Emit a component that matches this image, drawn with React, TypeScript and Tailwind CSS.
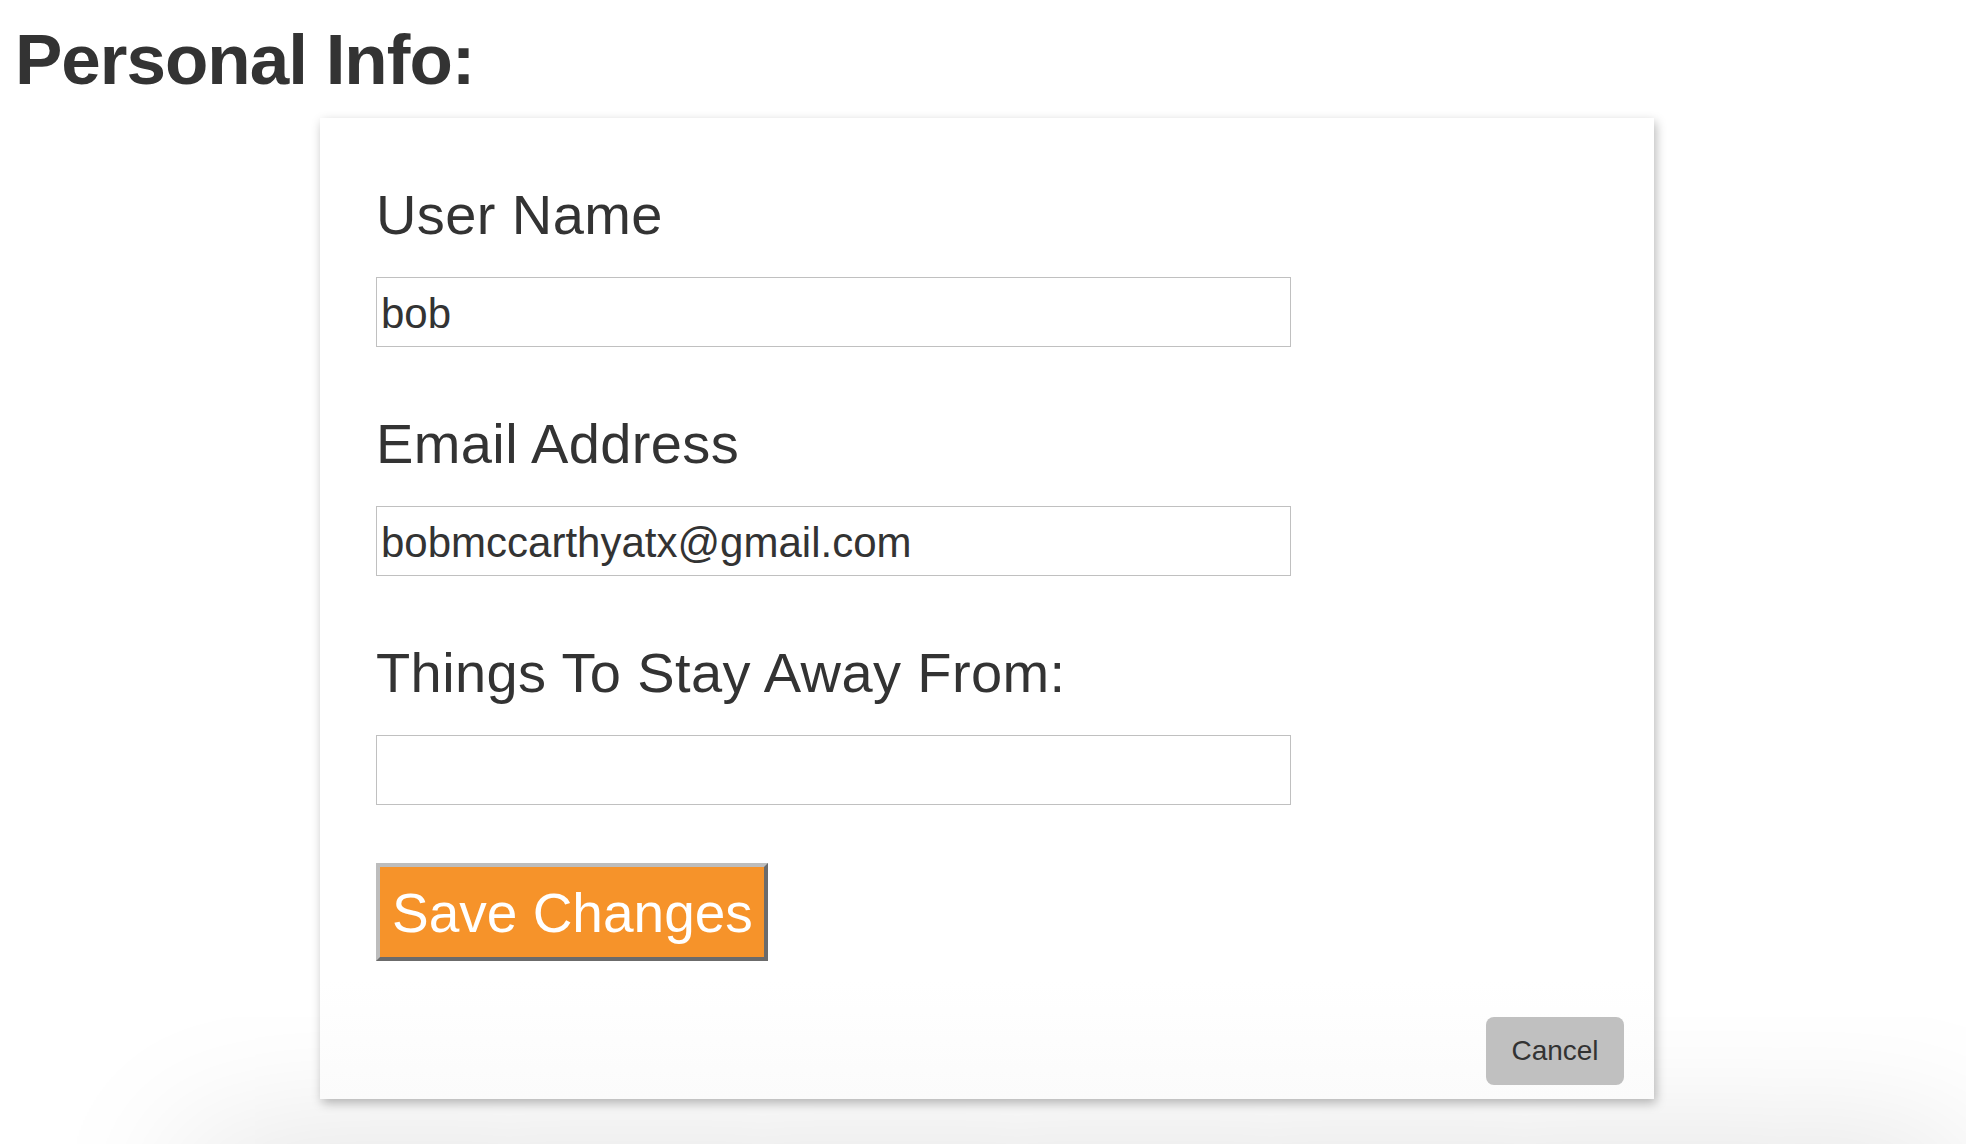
export default function App() {
  const fields = [
    { label: "User Name", value: "bob" },
    { label: "Email Address", value: "bobmccarthyatx@gmail.com" },
    { label: "Things To Stay Away From:", value: "" },
  ];

  return (
    <div className="flex h-screen flex-col overflow-hidden bg-white font-['Liberation_Sans',Arial,sans-serif] text-[#333333]">
      <h1 className="ml-[15px] mt-[20px] shrink-0 text-[71px] font-bold leading-[80px] tracking-[-1px]">
        Personal Info:
      </h1>

      <div className="relative ml-[320px] mt-[18px] flex w-[1334px] shrink-0 flex-col bg-[linear-gradient(to_bottom,#ffffff_88%,#fbfbfb)] pb-[14px] pl-[56px] pr-[30px] shadow-[2px_4px_10px_rgba(0,0,0,0.28)]">
        {fields.map((f) => (
          <div key={f.label} className="mt-[67px] flex flex-col">
            <label className="text-[56px] leading-[60px] tracking-[0.4px]">{f.label}</label>
            <input
              type="text"
              defaultValue={f.value}
              className="mt-[32px] h-[70px] w-[915px] border border-[#c0c0c0] bg-white px-[4px] pt-[3px] text-[42px] text-[#333333] outline-none"
            />
          </div>
        ))}

        <button
          type="button"
          className="mt-[58px] self-start border-4 border-b-[#6b6b6b] border-l-[#bdbdbd] border-r-[#6b6b6b] border-t-[#bdbdbd] bg-[#f6932a] pb-[13px] pl-[12px] pr-[11px] pt-[15px] text-[55px] leading-[62px] text-white"
        >
          Save Changes
        </button>

        <button
          type="button"
          className="mt-[56px] h-[68px] w-[138px] self-end rounded-[8px] bg-[#c0c0c0] text-[28px] leading-[32px] text-[#333333]"
        >
          Cancel
        </button>
      </div>

      <div className="ml-[190px] mt-[45px] h-[200px] shrink-0 bg-[#eeeeee] shadow-[0_0_150px_rgba(0,0,0,0.13)]" />
    </div>
  );
}
